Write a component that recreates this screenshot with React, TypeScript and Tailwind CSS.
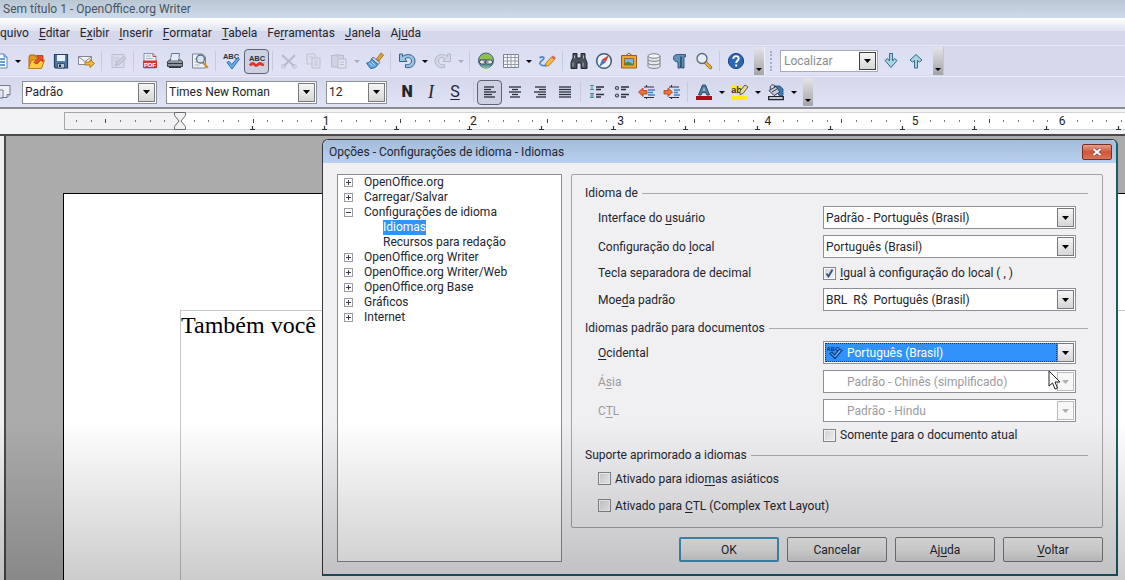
import { useState } from "react";
import type { ReactNode } from "react";
import clsx from "clsx";

const menus = [
  "quivo",
  "_Editar",
  "E_xibir",
  "_Inserir",
  "_Formatar",
  "_Tabela",
  "Fe_rramentas",
  "_Janela",
  "Aj_uda",
];

const treeItems = [
  { name: "OpenOffice.org" },
  { name: "Carregar/Salvar" },
  { name: "Configurações de idioma", children: ["Idiomas", "Recursos para redação"] },
  { name: "OpenOffice.org Writer" },
  { name: "OpenOffice.org Writer/Web" },
  { name: "OpenOffice.org Base" },
  { name: "Gráficos" },
  { name: "Internet" },
];

// "_" marks the access key, which is drawn underlined
function Mnemonic({ text }: { text: string }) {
  const i = text.indexOf("_");
  if (i < 0) return <>{text}</>;
  return (
    <>
      {text.slice(0, i)}
      <span className="underline underline-offset-2">{text[i + 1]}</span>
      {text.slice(i + 2)}
    </>
  );
}

function Svg({ children }: { children: ReactNode }) {
  return (
    <svg width="20" height="20" viewBox="0 0 20 20" fill="none" className="shrink-0">
      {children}
    </svg>
  );
}

const alignLines = (rows: [number, number][]) => (
  <Svg>
    {rows.map(([x1, x2], i) => (
      <path key={i} d={`M${x1} ${5 + i * 2.5}H${x2}`} stroke="#2b2f3a" strokeWidth="1.3" />
    ))}
  </Svg>
);

const icons: Record<string, ReactNode> = {
  newDoc: (
    <Svg>
      <path d="M4 3h10l3 3v11H4z" fill="#fff" stroke="#5b88b4" />
      <path d="M14 3v3h3" stroke="#3d7ab5" />
      <path d="M6 8h9M6 11h9M6 14h9" stroke="#3c7fc0" strokeWidth="1.3" />
    </Svg>
  ),
  open: (
    <Svg>
      <path d="M3 6l1-2h5l1 2h6v10H3z" fill="#e19a1c" stroke="#a8690a" />
      <path d="M2.500 17.500l3-8.500h13l-3 8.500z" fill="#fcc846" stroke="#c07c10" />
      <path d="M8 11.500l4.500-4.500-2-2.500H17v6.500l-2-2-4 4z" fill="#e8502a" stroke="#a8341a" strokeWidth=".8" />
    </Svg>
  ),
  save: (
    <Svg>
      <path d="M3.500 3.500h13v13.500h-12l-1-1z" fill="#4e7ba8" stroke="#28405c" strokeWidth="1.200" />
      <path d="M6 4h8v6H6z" fill="#eaf1f8" />
      <path d="M6.500 12.500h7V17h-7z" fill="#b9c6d4" stroke="#28405c" strokeWidth=".8" />
      <path d="M8 13.500h2V16H8z" fill="#1f3147" />
    </Svg>
  ),
  mail: (
    <Svg>
      <path d="M2.500 5.500h13v8h-13z" fill="#f4f4f4" stroke="#83878f" />
      <path d="M3 6l6 4.500L15 6" stroke="#83878f" />
      <path d="M9 11h5V8.500l4.500 4-4.500 4V14H9z" fill="#f5b93a" stroke="#a96e0c" strokeWidth=".9" />
    </Svg>
  ),
  edit: (
    <Svg>
      <path d="M4 3.500h12v13H4z" fill="#d9dcec" stroke="#bcc0ce" />
      <path d="M6 7h5M6 10h3" stroke="#bcc0ce" />
      <path d="M7 14.500l2-4 7-5 2 2-7 6z" fill="#cdd0de" stroke="#b3b7c6" />
    </Svg>
  ),
  pdf: (
    <Svg>
      <path d="M4 2.500h9l3 3V17H4z" fill="#eef2f8" stroke="#8a93a3" />
      <path d="M13 2.500v3h3" stroke="#c9483c" />
      <path d="M6 5h5M6 7.500h7" stroke="#9fb2c8" />
      <path d="M3 9.500h14v7.500H3z" fill="#d5392c" />
      <text x="10" y="15.600" textAnchor="middle" fontSize="6" fontWeight="700" fill="#fff" fontFamily="Liberation Sans, sans-serif">
        PDF
      </text>
    </Svg>
  ),
  print: (
    <Svg>
      <path d="M6.500 2.500h8L13.500 10h-8z" fill="#e3ecf5" stroke="#6d7684" />
      <path d="M2.500 10.500l2-1.500h11l2 1.500v5h-15z" fill="#8a929e" stroke="#3d4450" />
      <path d="M6 9.500l.5-3.500h7l-.5 3.500z" fill="#e3ecf5" />
      <path d="M3 12.500h14M4 16.500h12" stroke="#2f353f" strokeWidth="1.200" />
      <path d="M14 11h2" stroke="#8fd36a" strokeWidth="1.200" />
    </Svg>
  ),
  preview: (
    <Svg>
      <path d="M2.500 3h10l3 3v11h-13z" fill="#eef1f6" stroke="#7c8594" />
      <path d="M4.500 8h4M4.500 11h3M4.500 14h5" stroke="#a9b2c0" />
      <path d="M13 11.500l4 4.500" stroke="#c8932a" strokeWidth="2.400" strokeLinecap="round" />
      <circle cx="10.500" cy="8" r="4" fill="#d5e6f4" stroke="#5d6b7c" strokeWidth="1.300" />
    </Svg>
  ),
  spell: (
    <Svg>
      <text x="9" y="8" textAnchor="middle" fontSize="7.500" fontWeight="700" fill="#2c3340" fontFamily="Liberation Sans, sans-serif">
        ABC
      </text>
      <path d="M5 11.500l1.800-1.300 3 3.300 6-7 1.600 1.500L10 18z" fill="#6aaee6" stroke="#2460a0" strokeWidth=".9" />
    </Svg>
  ),
  autoSpell: (
    <Svg>
      <text x="10" y="9.500" textAnchor="middle" fontSize="7.500" fontWeight="700" fill="#2c3340" fontFamily="Liberation Sans, sans-serif">
        ABC
      </text>
      <path d="M3 14.500c2-2.500 3-2.500 4.500-1s2.500 1 3.500 0 2.500-1.500 4 0l2 .5" stroke="#e0352b" strokeWidth="2.800" />
    </Svg>
  ),
  cut: (
    <Svg>
      <path d="M3 4l12 11M16 4L5 15" stroke="#b8bac8" strokeWidth="2" />
      <circle cx="4.500" cy="15.500" r="1.800" stroke="#b8bac8" />
      <circle cx="15.500" cy="15.500" r="1.800" stroke="#b8bac8" />
    </Svg>
  ),
  copy: (
    <Svg>
      <path d="M3 3h8v10H3z" fill="#dcdfed" stroke="#bfc2d0" />
      <path d="M8 7h8v10H8z" fill="#dcdfed" stroke="#bfc2d0" />
      <path d="M10 10h4M10 12h4M10 14h4M5 6h4" stroke="#c5c8d5" />
    </Svg>
  ),
  paste: (
    <Svg>
      <path d="M2.500 4.500h12V16h-12z" fill="#cfd2e0" stroke="#b8bbc9" />
      <path d="M6 3h5v3H6z" fill="#c3c6d3" />
      <path d="M9 8h8v9H9z" fill="#e1e3ef" stroke="#b8bbc9" />
      <path d="M11 11h4M11 13.500h4" stroke="#bbbecb" />
    </Svg>
  ),
  brush: (
    <Svg>
      <path d="M11.500 8l4.500-6 2.500 2-4.500 6z" fill="#e5a32c" stroke="#94630f" strokeWidth=".8" />
      <path d="M8 6l7 5.500-2 2L6.500 8z" fill="#c9d3de" stroke="#516478" strokeWidth=".8" />
      <path d="M6.500 8l6.500 5.500c-1.500 3-5 4-7.500 4L1.500 12c2.500 0 4-1.500 5-4z" fill="#5aa0e0" stroke="#2560a0" strokeWidth=".9" />
      <path d="M4.500 12l3.500 3.500M6.500 10.500l4 4" stroke="#dbeaf8" strokeWidth=".8" />
    </Svg>
  ),
  undo: (
    <Svg>
      <path d="M2.500 3h3v2.500C11 1.500 18 4 18 10c0 5-4.500 7.500-9.500 6.500v-3c3 .6 6-.5 6-3.500 0-3.500-4-4.500-6.500-2l2 2.500H2.500z" fill="#9cc3e4" stroke="#33618f" strokeLinejoin="round" />
    </Svg>
  ),
  redo: (
    <Svg>
      <path d="M17.500 3h-3v2.500C9 1.500 2 4 2 10c0 5 4.500 7.500 9.500 6.500v-3c-3 .6-6-.5-6-3.500 0-3.500 4-4.500 6.500-2l-2 2.500h7.500z" fill="#d3d6e4" stroke="#b2b8c6" strokeLinejoin="round" />
    </Svg>
  ),
  link: (
    <Svg>
      <circle cx="10" cy="9.500" r="7.500" fill="#5d96c8" stroke="#3e5f80" />
      <path d="M3.500 7c1.500-4 9-6 12-2l1.500 4-4 1-3-2-5 1zM5 14l5 2 5-1-3 2.200H8z" fill="#93bf45" />
      <rect x="3.500" y="9" width="7.500" height="4" rx="2" fill="#e9edf2" stroke="#39424e" />
      <rect x="9" y="9" width="7.500" height="4" rx="2" stroke="#39424e" fill="#e9edf2" />
      <path d="M7.500 11h5" stroke="#39424e" />
    </Svg>
  ),
  table: (
    <Svg>
      <path d="M2.500 3.500h15v13h-15z" fill="#f7f8fb" stroke="#7a828f" />
      <path d="M2.500 6.500h15M2.500 10h15M2.500 13.500h15M6.500 3.500v13M10 3.500v13M14 3.500v13" stroke="#8b93a0" strokeWidth=".9" />
    </Svg>
  ),
  draw: (
    <Svg>
      <path d="M2.500 7c2.500-2 5.500-1 4 1s-5 3.500-3 5.500 4.500.8 6 .8" stroke="#4a86c8" strokeWidth="1.700" />
      <path d="M9 12l5.500-6 3 2.500-5.500 6-3.500.8z" fill="#f6bb3f" stroke="#a76a12" strokeWidth=".8" />
      <path d="M14.500 6l1.500-1.500 3 2.500L17.500 8.500z" fill="#e2604d" />
    </Svg>
  ),
  find: (
    <Svg>
      <path d="M4 2.500h4V7h4V2.500h4v4l2 5v6h-6V12H8v5.500H2v-6l2-5z" fill="#4b515b" stroke="#22262d" />
      <path d="M5.500 4.500v3M14.500 4.500v3M4 11.500v4M14 11.500v4" stroke="#a9b0ba" />
    </Svg>
  ),
  navigator: (
    <Svg>
      <circle cx="10" cy="10" r="7.300" fill="#eef3f8" stroke="#425a7c" strokeWidth="1.500" />
      <path d="M15 4l-7 4.500 3.500 3z" fill="#e0412f" />
      <path d="M5 16l6.500-4.500-3.500-3z" fill="#3b7ac2" />
    </Svg>
  ),
  gallery: (
    <Svg>
      <path d="M7 4.500L10 2l3 2.500" stroke="#8b6528" />
      <path d="M2.500 4.500h15v12.500h-15z" fill="#eda538" stroke="#96600e" />
      <path d="M5.500 7.500h9v6.500h-9z" fill="#79b7e8" stroke="#8a5a12" strokeWidth=".8" />
      <path d="M6 14v-2l3-1.500 5 2.500v1z" fill="#4a8a3e" />
    </Svg>
  ),
  database: (
    <Svg>
      <path d="M4 5v10.500c0 2.500 12 2.500 12 0V5" fill="#e4e7eb" stroke="#7a808a" />
      <ellipse cx="10" cy="5" rx="6" ry="2.200" fill="#f4f5f7" stroke="#7a808a" />
      <path d="M4 8.500c0 2.400 12 2.400 12 0M4 12c0 2.400 12 2.400 12 0" stroke="#7a808a" />
    </Svg>
  ),
  pilcrow: (
    <Svg>
      <path d="M16.500 3.500v2.300H15V17h-2.500V5.800h-1V17H9v-6C3 11 3 3.500 8.500 3.500z" fill="#5e93ba" stroke="#274c6b" strokeWidth=".9" />
    </Svg>
  ),
  zoom: (
    <Svg>
      <path d="M11.500 11.500l5 5" stroke="#8d6417" strokeWidth="3.400" strokeLinecap="round" />
      <path d="M12 12l4.500 4.500" stroke="#f0b73c" strokeWidth="2" strokeLinecap="round" />
      <circle cx="8" cy="7.500" r="5" fill="#e5eef7" stroke="#5c6674" strokeWidth="1.300" />
    </Svg>
  ),
  help: (
    <Svg>
      <circle cx="10" cy="10" r="7.600" fill="#2f66b5" stroke="#1d4384" />
      <path d="M7.300 8c0-4 5.700-3.600 5.400-.3-.2 1.800-2.500 2-2.500 4.200M10.200 13.500v2" stroke="#fff" strokeWidth="1.900" />
    </Svg>
  ),
  down: (
    <Svg>
      <path d="M8.500 2.500h3v7.500l2-2.500L16 9.500l-6 7-6-7 2.500-2 2 2.500z" fill="#a9d3e4" stroke="#366a85" strokeLinejoin="round" />
    </Svg>
  ),
  up: (
    <Svg>
      <path d="M8.500 17h3v-7.500l2 1.500L16 9l-6-5.500L4 9l2.500 2 2-1.500z" fill="#a9d3e4" stroke="#366a85" strokeLinejoin="round" />
    </Svg>
  ),
  styles: (
    <Svg>
      <path d="M7 3.500h11v9l-3 3h-5" fill="#eef0f6" stroke="#737a88" />
      <path d="M7 8h4v8H7M15 15.500v-3h3" stroke="#737a88" />
    </Svg>
  ),
  left: alignLines([[4, 14], [4, 11], [4, 16], [4, 12], [4, 15]]),
  center: alignLines([[4, 16], [7, 13], [4, 16], [7, 13], [5, 15]]),
  right: alignLines([[5, 16], [9, 16], [4, 16], [8, 16], [6, 16]]),
  justify: alignLines([[4, 16], [4, 16], [4, 16], [4, 16], [4, 16]]),
  numbered: (
    <Svg>
      <path d="M3 3.500h4M5 3.500v4M3 7.500h4M3 11.500h4M4.200 11.500v4M5.800 11.500v4M3 15.500h4" stroke="#4c8c9c" />
      <path d="M9 5h8M9 7.500h5M9 12.500h8M9 15h5" stroke="#2b2f3a" strokeWidth="1.300" />
    </Svg>
  ),
  bullets: (
    <Svg>
      <circle cx="5" cy="6" r="1.500" stroke="#33414f" strokeWidth="1.200" />
      <circle cx="5" cy="13.500" r="1.500" stroke="#33414f" strokeWidth="1.200" />
      <path d="M9 5h8M9 7.500h5M9 12.500h8M9 15h5" stroke="#2b2f3a" strokeWidth="1.300" />
    </Svg>
  ),
  outdent: (
    <Svg>
      <path d="M7 5h10M7 15.500h10M9.500 3v2M9.500 15v2" stroke="#2b2f3a" strokeWidth="1.100" />
      <path d="M11 8h7M11 10.500h5M11 13h7" stroke="#3d86c8" strokeWidth="1.500" />
      <path d="M1.500 10L6 6v2.500h4v3.500H6v2.500z" fill="#ee7136" stroke="#a83e14" strokeWidth=".8" />
    </Svg>
  ),
  indent: (
    <Svg>
      <path d="M7 5h10M7 15.500h10M9.500 3v2M9.500 15v2" stroke="#2b2f3a" strokeWidth="1.100" />
      <path d="M12 8h6M12 10.500h4M12 13h6" stroke="#3d86c8" strokeWidth="1.500" />
      <path d="M10.500 10L6 6v2.500H2v3.500h4v2.500z" fill="#ee7136" stroke="#a83e14" strokeWidth=".8" />
    </Svg>
  ),
  fontColor: (
    <Svg>
      <path d="M4.500 13L8.500 3h3l4 10h-2.700l-.8-2.400H8L7.200 13z" fill="#4f7fa0" stroke="#263e52" strokeWidth=".9" />
      <path d="M9 8.500h2L10 5.500z" fill="#dde1f2" />
      <path d="M2 14h16v4H2z" fill="#a01218" />
    </Svg>
  ),
  highlight: (
    <Svg>
      <path d="M2 14h16v4H2zM1 3h10v9H1z" fill="#fdec1c" />
      <text x="6.500" y="11" textAnchor="middle" fontSize="9" fontWeight="700" fill="#2c3340" fontFamily="Liberation Sans, sans-serif">
        ab
      </text>
      <path d="M10 9l5-6 3 2-5 6.500-3 1z" fill="#e9dc9a" stroke="#4a4a3c" strokeWidth=".9" />
    </Svg>
  ),
  background: (
    <Svg>
      <path d="M8 4h6l3 3v6.500h-4z" fill="#3b7bb8" stroke="#234c78" strokeWidth=".8" />
      <path d="M3 8.500l7-4 4 5.500-6 3.500z" fill="#c3ccd6" stroke="#323c49" />
      <path d="M4.500 7.500C3 3.500 7 1 9.500 4.500M6 10l5-3" stroke="#323c49" />
      <path d="M2.700 14.700h14.600v2.800H2.700z" fill="#fff" stroke="#1d2733" strokeWidth="1.300" />
    </Svg>
  ),
};

function Caret({ muted }: { muted?: boolean }) {
  return (
    <svg width="7" height="4" viewBox="0 0 7 4" className="shrink-0">
      <path d="M0 0h7L3.500 4z" fill={muted ? "#b0b0b4" : "#000"} />
    </svg>
  );
}

function Tool({ icon, label, active }: { icon: string; label: string; active?: boolean }) {
  return (
    <button
      aria-label={label}
      className={clsx(
        "flex h-[25px] w-[25px] shrink-0 items-center justify-center rounded-sm",
        active && "border border-[#5d6373] bg-[#cdd1e2]"
      )}
    >
      {icons[icon]}
    </button>
  );
}

function Drop({ label, muted }: { label: string; muted?: boolean }) {
  return (
    <button aria-label={label} className="flex h-6 w-[11px] shrink-0 items-center justify-center">
      <svg width="6" height="3" viewBox="0 0 6 3">
        <path d="M0 0h6L3 3z" fill={muted ? "#a9acba" : "#000"} />
      </svg>
    </button>
  );
}

function Sep() {
  return (
    <span className="flex w-[7px] shrink-0 justify-center">
      <span className="h-5 w-px bg-[#c8cbdc]" />
    </span>
  );
}

function Overflow({ label }: { label: string }) {
  return (
    <button
      aria-label={label}
      className="flex h-7 w-[10px] shrink-0 items-end justify-center bg-linear-to-b from-[#e4e4ea] to-[#a4a4a8] pb-1"
    >
      <svg width="6" height="3" viewBox="0 0 6 3">
        <path d="M0 0h6L3 3z" fill="#000" />
      </svg>
    </button>
  );
}

function Combo({
  label,
  id,
  options,
  disabled,
  highlighted,
  className,
}: {
  label?: string;
  id?: string;
  options: string[];
  disabled?: boolean;
  highlighted?: boolean;
  className?: string;
}) {
  return (
    <div className={clsx("relative flex h-[23px] border border-[#8e9097] bg-white p-px", className)}>
      <select
        id={id}
        aria-label={label}
        disabled={disabled}
        className={clsx(
          "w-full min-w-0 appearance-none whitespace-pre outline-none",
          disabled && "pr-5 pl-[22px] text-[#9b9b9f] opacity-100",
          highlighted && "mr-[17px] border border-dotted border-[#16365c] bg-[#3093fb] pl-[21px] text-white",
          !disabled && !highlighted && "pr-5 pl-px"
        )}
      >
        {options.map((o) => (
          <option key={o}>{o}</option>
        ))}
      </select>
      {highlighted && (
        <svg width="16" height="15" viewBox="0 0 16 15" className="pointer-events-none absolute top-[3px] left-[3px]">
          <text x="6" y="6" textAnchor="middle" fontSize="6" fontWeight="700" fill="#0f2f5c" fontFamily="Liberation Sans, sans-serif">
            ABC
          </text>
          <path d="M3 8.500l2-1.500 2.500 3L12.500 4 15 5.500 8 13.500z" fill="#6ab4ff" stroke="#0f3f80" strokeWidth="1.200" />
        </svg>
      )}
      <span
        className={clsx(
          "pointer-events-none absolute inset-y-px right-px flex w-[17px] items-center justify-center border",
          disabled ? "border-[#bcbcc0] bg-[#f7f7f8]" : "border-[#77797f] bg-linear-to-b from-[#f6f6f6] to-[#d6d6d8]"
        )}
      >
        <Caret muted={disabled} />
      </span>
    </div>
  );
}

function Check({ label, defaultChecked }: { label: string; defaultChecked?: boolean }) {
  const [checked, setChecked] = useState(!!defaultChecked);
  return (
    <label className="flex items-center gap-1">
      <span className="relative flex h-[13px] w-[13px]">
        <input
          type="checkbox"
          checked={checked}
          onChange={(e) => setChecked(e.target.checked)}
          className="h-[13px] w-[13px] appearance-none border border-[#86888e] bg-linear-to-br from-[#cfd1d6] to-[#f6f6f8] ring-1 ring-[#f8f8fa] ring-inset"
        />
        {checked && (
          <svg width="13" height="13" viewBox="0 0 13 13" className="pointer-events-none absolute inset-0" fill="none">
            <path d="M3.500 6.500l2 3 4-7" stroke="#35507e" strokeWidth="1.800" />
          </svg>
        )}
      </span>
      <span>
        <Mnemonic text={label} />
      </span>
    </label>
  );
}

function GroupTitle({ children }: { children: ReactNode }) {
  return (
    <div className="flex h-5 items-center gap-1">
      <h3>{children}</h3>
      <span className="h-px flex-1 bg-[#a9aab0]" />
    </div>
  );
}

function Field({
  id,
  label,
  value,
  disabled,
  highlighted,
}: {
  id: string;
  label: string;
  value: string;
  disabled?: boolean;
  highlighted?: boolean;
}) {
  return (
    <div className="flex h-[29px] items-center pr-3 pl-[13px]">
      <label htmlFor={id} className={clsx("w-[225px] shrink-0", disabled && "text-[#9b9b9f]")}>
        <Mnemonic text={label} />
      </label>
      <Combo id={id} options={[value]} disabled={disabled} highlighted={highlighted} className="flex-1" />
    </div>
  );
}

function Ruler() {
  const unit = 147.2;
  const origin = 179;
  const dots = Array.from({ length: 80 }, (_, i) => i - 7).filter((i) => i !== 0 && (i < 0 || i % 10 !== 0));
  return (
    <div className="flex h-[25px] overflow-hidden bg-[#f3f2f4]">
      <svg height="25" className="w-full" role="img" aria-label="Régua">
        <rect x="64.500" y="3.500" width="2000" height="17" fill="#fff" stroke="#d4d4d8" />
        <rect x="64.500" y="3.500" width="115" height="17" fill="#f1f0f2" stroke="#a5a5aa" />
        {dots.map((i) => {
          const half = Math.abs(i) % 5 === 0;
          return (
            <rect
              key={i}
              x={Math.round(origin + (i * unit) / 10)}
              y={half ? 10 : 11}
              width="1"
              height={half ? 4 : 2}
              fill={half ? "#444" : "#777"}
            />
          );
        })}
        {Array.from({ length: 13 }, (_, i) => Math.round(252 + i * 72.2)).map((x) => (
          <path key={x} d={`M${x - 2} 20.500h5M${x + 0.5} 17v3`} stroke="#333" strokeWidth="1.200" />
        ))}
        {[1, 2, 3, 4, 5, 6].map((n) => (
          <text key={n} x={origin + n * unit} y="16" textAnchor="middle" fontSize="12" fill="#222">
            {n}
          </text>
        ))}
        <path d="M174.500 3.500h11v3l-4.500 5.500 4.500 5.500v3h-11v-3l4.500-5.500-4.500-5.500z" fill="#f1f1f3" stroke="#6b6b70" />
      </svg>
    </div>
  );
}

function Tree() {
  const [selected, setSelected] = useState("Idiomas");
  return (
    <ul className="w-[225px] shrink-0 border border-[#8b8d94] bg-white">
      {treeItems.map((item) => (
        <li key={item.name}>
          <div className="flex h-[15px] items-center gap-[11px] pl-[6px]">
            <button
              aria-label={item.name}
              className="flex h-[9px] w-[9px] items-center justify-center border border-[#9a9ca4] bg-white"
            >
              <svg width="5" height="5" viewBox="0 0 5 5">
                <path d={item.children ? "M0 2.500h5" : "M0 2.500h5M2.500 0v5"} stroke="#3a3c48" />
              </svg>
            </button>
            <span className="leading-[15px]">{item.name}</span>
          </div>
          {item.children?.map((child) => (
            <div key={child} className="flex h-[15px] items-center pl-[45px]">
              <button
                onClick={() => setSelected(child)}
                className={clsx("leading-[15px]", selected === child && "bg-[#3093fb] text-white")}
              >
                {child}
              </button>
            </div>
          ))}
        </li>
      ))}
    </ul>
  );
}

function OptionsDialog() {
  return (
    <div
      role="dialog"
      aria-label="Opções"
      className="absolute top-[139px] right-[7px] left-[322px] flex flex-col rounded-t-md border border-r-2 border-b-2 border-[#33373f] border-r-[#1d5b6c] border-b-[#1d5b6c] bg-[#f0eff2]"
    >
      <div className="flex h-[23px] items-center justify-between rounded-t-md bg-linear-to-b from-[#a3bcd9] to-[#b9d1ef] pr-1 pl-[6px]">
        <h2>Opções - Configurações de idioma - Idiomas</h2>
        <button
          aria-label="Fechar"
          className="flex h-4 w-[30px] items-center justify-center rounded-xs border border-[#7c2c20] bg-linear-to-b from-[#e2a08d] via-[#cf5437] to-[#d9745a]"
        >
          <svg width="10" height="8" viewBox="0 0 10 8">
            <path d="M1.500 1l7 6M8.500 1l-7 6" stroke="#6a4a48" strokeWidth="3.200" />
            <path d="M1.500 1l7 6M8.500 1l-7 6" stroke="#fff" strokeWidth="2" />
          </svg>
        </button>
      </div>
      <div className="flex gap-[9px] pt-[11px] pr-[13px] pb-3 pl-[14px]">
        <Tree />
        <div className="flex min-w-0 flex-1 flex-col gap-[9px]">
          <form className="flex flex-col rounded-xs border border-[#a3a4aa] pt-2 pr-[14px] pb-2 pl-[13px]">
            <GroupTitle>Idioma de</GroupTitle>
            <Field id="ui" label="Interface do _usuário" value="Padrão - Português (Brasil)" />
            <Field id="locale" label="Configuração do _local" value="Português (Brasil)" />
            <div className="flex h-6 items-center pl-[13px]">
              <span className="w-[225px] shrink-0">Tecla separadora de decimal</span>
              <Check label="_Igual à configuração do local ( , )" defaultChecked />
            </div>
            <Field id="currency" label="Moe_da padrão" value={"BRL\u00a0 R$\u00a0 Português (Brasil)"} />
            <div className="mt-1">
              <GroupTitle>Idiomas padrão para documentos</GroupTitle>
            </div>
            <Field id="western" label="_Ocidental" value="Português (Brasil)" highlighted />
            <Field id="asian" label="Á_sia" value="Padrão - Chinês (simplificado)" disabled />
            <Field id="ctl" label="C_TL" value="Padrão - Hindu" disabled />
            <div className="flex h-5 items-center pl-[238px]">
              <Check label="Somente _para o documento atual" />
            </div>
            <GroupTitle>Suporte aprimorado a idiomas</GroupTitle>
            <div className="flex h-[27px] items-center pl-[13px]">
              <Check label="Ativado para idio_mas asiáticos" />
            </div>
            <div className="flex h-[27px] items-center pl-[13px]">
              <Check label="Ativado para _CTL (Complex Text Layout)" />
            </div>
          </form>
          <div className="flex justify-end gap-2">
            {["OK", "Cancelar", "Aj_uda", "_Voltar"].map((b) => (
              <button
                key={b}
                className={clsx(
                  "h-[25px] w-[100px] rounded-xs border bg-linear-to-b from-[#f4f4f4] via-[#eeeeef] to-[#dcdcde]",
                  b === "OK" ? "border-2 border-[#4396bd]" : "border-[#7b7c80]"
                )}
              >
                <Mnemonic text={b} />
              </button>
            ))}
          </div>
        </div>
      </div>
    </div>
  );
}

export default function App() {
  return (
    <div className="relative flex h-screen flex-col overflow-hidden bg-[#f0eff2] font-[Roboto,'Open_Sans',sans-serif] text-[12px] leading-4 text-[#23252f]">
      <header className="flex h-[18px] shrink-0 items-center bg-linear-to-b from-[#bac7d3] to-[#cddaea] pl-[3px] text-[#4a545f]">
        <h1>Sem título 1 - OpenOffice.org Writer</h1>
      </header>
      <nav className="flex h-[27px] shrink-0 items-center gap-[10px] bg-linear-to-b from-white via-[#dde1f1] to-[#d5d8eb] to-40% pt-0.5">
        {menus.map((m) => (
          <button key={m} className="shrink-0">
            <Mnemonic text={m} />
          </button>
        ))}
      </nav>

      <div className="flex h-[31px] shrink-0 items-center border-t border-[#e6e8f4] bg-[#d6d9ec]">
        <div className="flex items-center border-r border-[#f0f1f8] bg-linear-to-b from-[#dadef0] to-[#dfe3f5]">
          <div className="-ml-[13px] flex items-center">
            <Tool icon="newDoc" label="Novo" />
            <Drop label="Mais documentos" />
            <Tool icon="open" label="Abrir" />
            <Tool icon="save" label="Salvar" />
            <Tool icon="mail" label="Enviar" />
            <Sep />
            <Tool icon="edit" label="Editar arquivo" />
            <Sep />
            <Tool icon="pdf" label="Exportar como PDF" />
            <Tool icon="print" label="Imprimir" />
            <Tool icon="preview" label="Visualizar página" />
            <Sep />
            <Tool icon="spell" label="Verificação ortográfica" />
            <Tool icon="autoSpell" label="Autoverificação" active />
            <Sep />
            <Tool icon="cut" label="Cortar" />
            <Tool icon="copy" label="Copiar" />
            <Tool icon="paste" label="Colar" />
            <Drop label="Opções de colagem" muted />
            <Tool icon="brush" label="Pincel de estilo" />
            <Sep />
            <Tool icon="undo" label="Desfazer" />
            <Drop label="Lista de desfazer" />
            <Tool icon="redo" label="Refazer" />
            <Drop label="Lista de refazer" muted />
            <Sep />
            <Tool icon="link" label="Hiperlink" />
            <Tool icon="table" label="Tabela" />
            <Drop label="Tamanho da tabela" />
            <Tool icon="draw" label="Desenho" />
            <Sep />
            <Tool icon="find" label="Localizar e substituir" />
            <Tool icon="navigator" label="Navegador" />
            <Tool icon="gallery" label="Galeria" />
            <Tool icon="database" label="Fontes de dados" />
            <Tool icon="pilcrow" label="Caracteres não imprimíveis" />
            <Tool icon="zoom" label="Zoom" />
            <Sep />
            <Tool icon="help" label="Ajuda" />
          </div>
          <span className="w-[6px]" />
          <Overflow label="Mais ferramentas" />
        </div>
        <div className="flex items-center border-r border-[#c3c6d8] bg-linear-to-b from-[#dadef0] to-[#dfe3f5] pl-[5px]">
          <span className="mr-2 h-5 border-l-2 border-dotted border-[#a9adc2]" />
          <div className="relative flex h-[22px] w-[98px] border border-[#a9abb5] bg-white">
            <input
              aria-label="Localizar"
              placeholder="Localizar"
              className="w-full min-w-0 pl-[3px] outline-none placeholder:text-[#8a8c92]"
            />
            <button
              aria-label="Histórico"
              className="my-px mr-px flex w-[17px] shrink-0 items-center justify-center border border-[#3e4046] bg-linear-to-b from-[#f6f6f6] to-[#d6d6d8]"
            >
              <Caret />
            </button>
          </div>
          <Tool icon="down" label="Localizar próximo" />
          <Tool icon="up" label="Localizar anterior" />
          <span className="w-[5px]" />
          <Overflow label="Mais opções de localização" />
        </div>
      </div>

      <div className="flex h-[31px] shrink-0 items-center border-t border-[#eceef7] bg-linear-to-b from-[#d5d8eb] to-[#dfe3f5]">
        <div className="-ml-[11px] flex items-center">
          <Tool icon="styles" label="Estilos e formatação" />
        </div>
        <div className="ml-2 flex items-center gap-[9px]">
          <Combo label="Estilo" options={["Padrão"]} className="w-[135px]" />
          <Combo label="Fonte" options={["Times New Roman"]} className="w-[151px]" />
          <Combo label="Tamanho" options={["12"]} className="w-[61px]" />
        </div>
        <div className="ml-2 flex items-center">
          <button className="w-6 text-base font-black">N</button>
          <button className="w-6 font-['Liberation_Serif',serif] text-lg italic">I</button>
          <button className="w-6 text-base underline underline-offset-2">S</button>
          <span className="w-[3px]" />
          <Sep />
          <Tool icon="left" label="Alinhar à esquerda" active />
          <Tool icon="center" label="Centralizar" />
          <Tool icon="right" label="Alinhar à direita" />
          <Tool icon="justify" label="Justificar" />
          <Sep />
          <Tool icon="numbered" label="Numeração" />
          <Tool icon="bullets" label="Marcadores" />
          <Tool icon="outdent" label="Diminuir recuo" />
          <Tool icon="indent" label="Aumentar recuo" />
          <Sep />
          <Tool icon="fontColor" label="Cor da fonte" />
          <Drop label="Cores da fonte" />
          <Tool icon="highlight" label="Realce" />
          <Drop label="Cores de realce" />
          <Tool icon="background" label="Plano de fundo" />
          <Drop label="Cores de fundo" />
        </div>
        <span className="w-1" />
        <Overflow label="Mais formatação" />
      </div>

      <div className="shrink-0 border-t-2 border-b-2 border-t-[#8b8c94] border-b-[#4c484c]">
        <Ruler />
      </div>

      <main className="ml-1 flex flex-1 border-l-2 border-[#4c484c] bg-[#ababab] pt-[57px] pl-[57px]">
        <div className="flex-1 border-t border-l border-black bg-white pt-[116px] pl-[116px]">
          <p className="h-full border-t border-l border-[#c8c8c8] font-['Liberation_Serif',serif] text-2xl leading-7 text-black">
            Também você
          </p>
        </div>
      </main>

      <OptionsDialog />

      {/* mouse pointer */}
      <svg width="13" height="20" viewBox="0 0 13 20" className="pointer-events-none absolute top-[370px] left-[1048px]">
        <path d="M1 1v15l3.500-3 2.500 6 2.500-1-2.500-6H12z" fill="#fff" stroke="#222" />
      </svg>

      {/* shade along the bottom edge */}
      <div className="pointer-events-none absolute inset-x-0 bottom-0 h-40 bg-linear-to-b from-transparent to-black/20" />
    </div>
  );
}
